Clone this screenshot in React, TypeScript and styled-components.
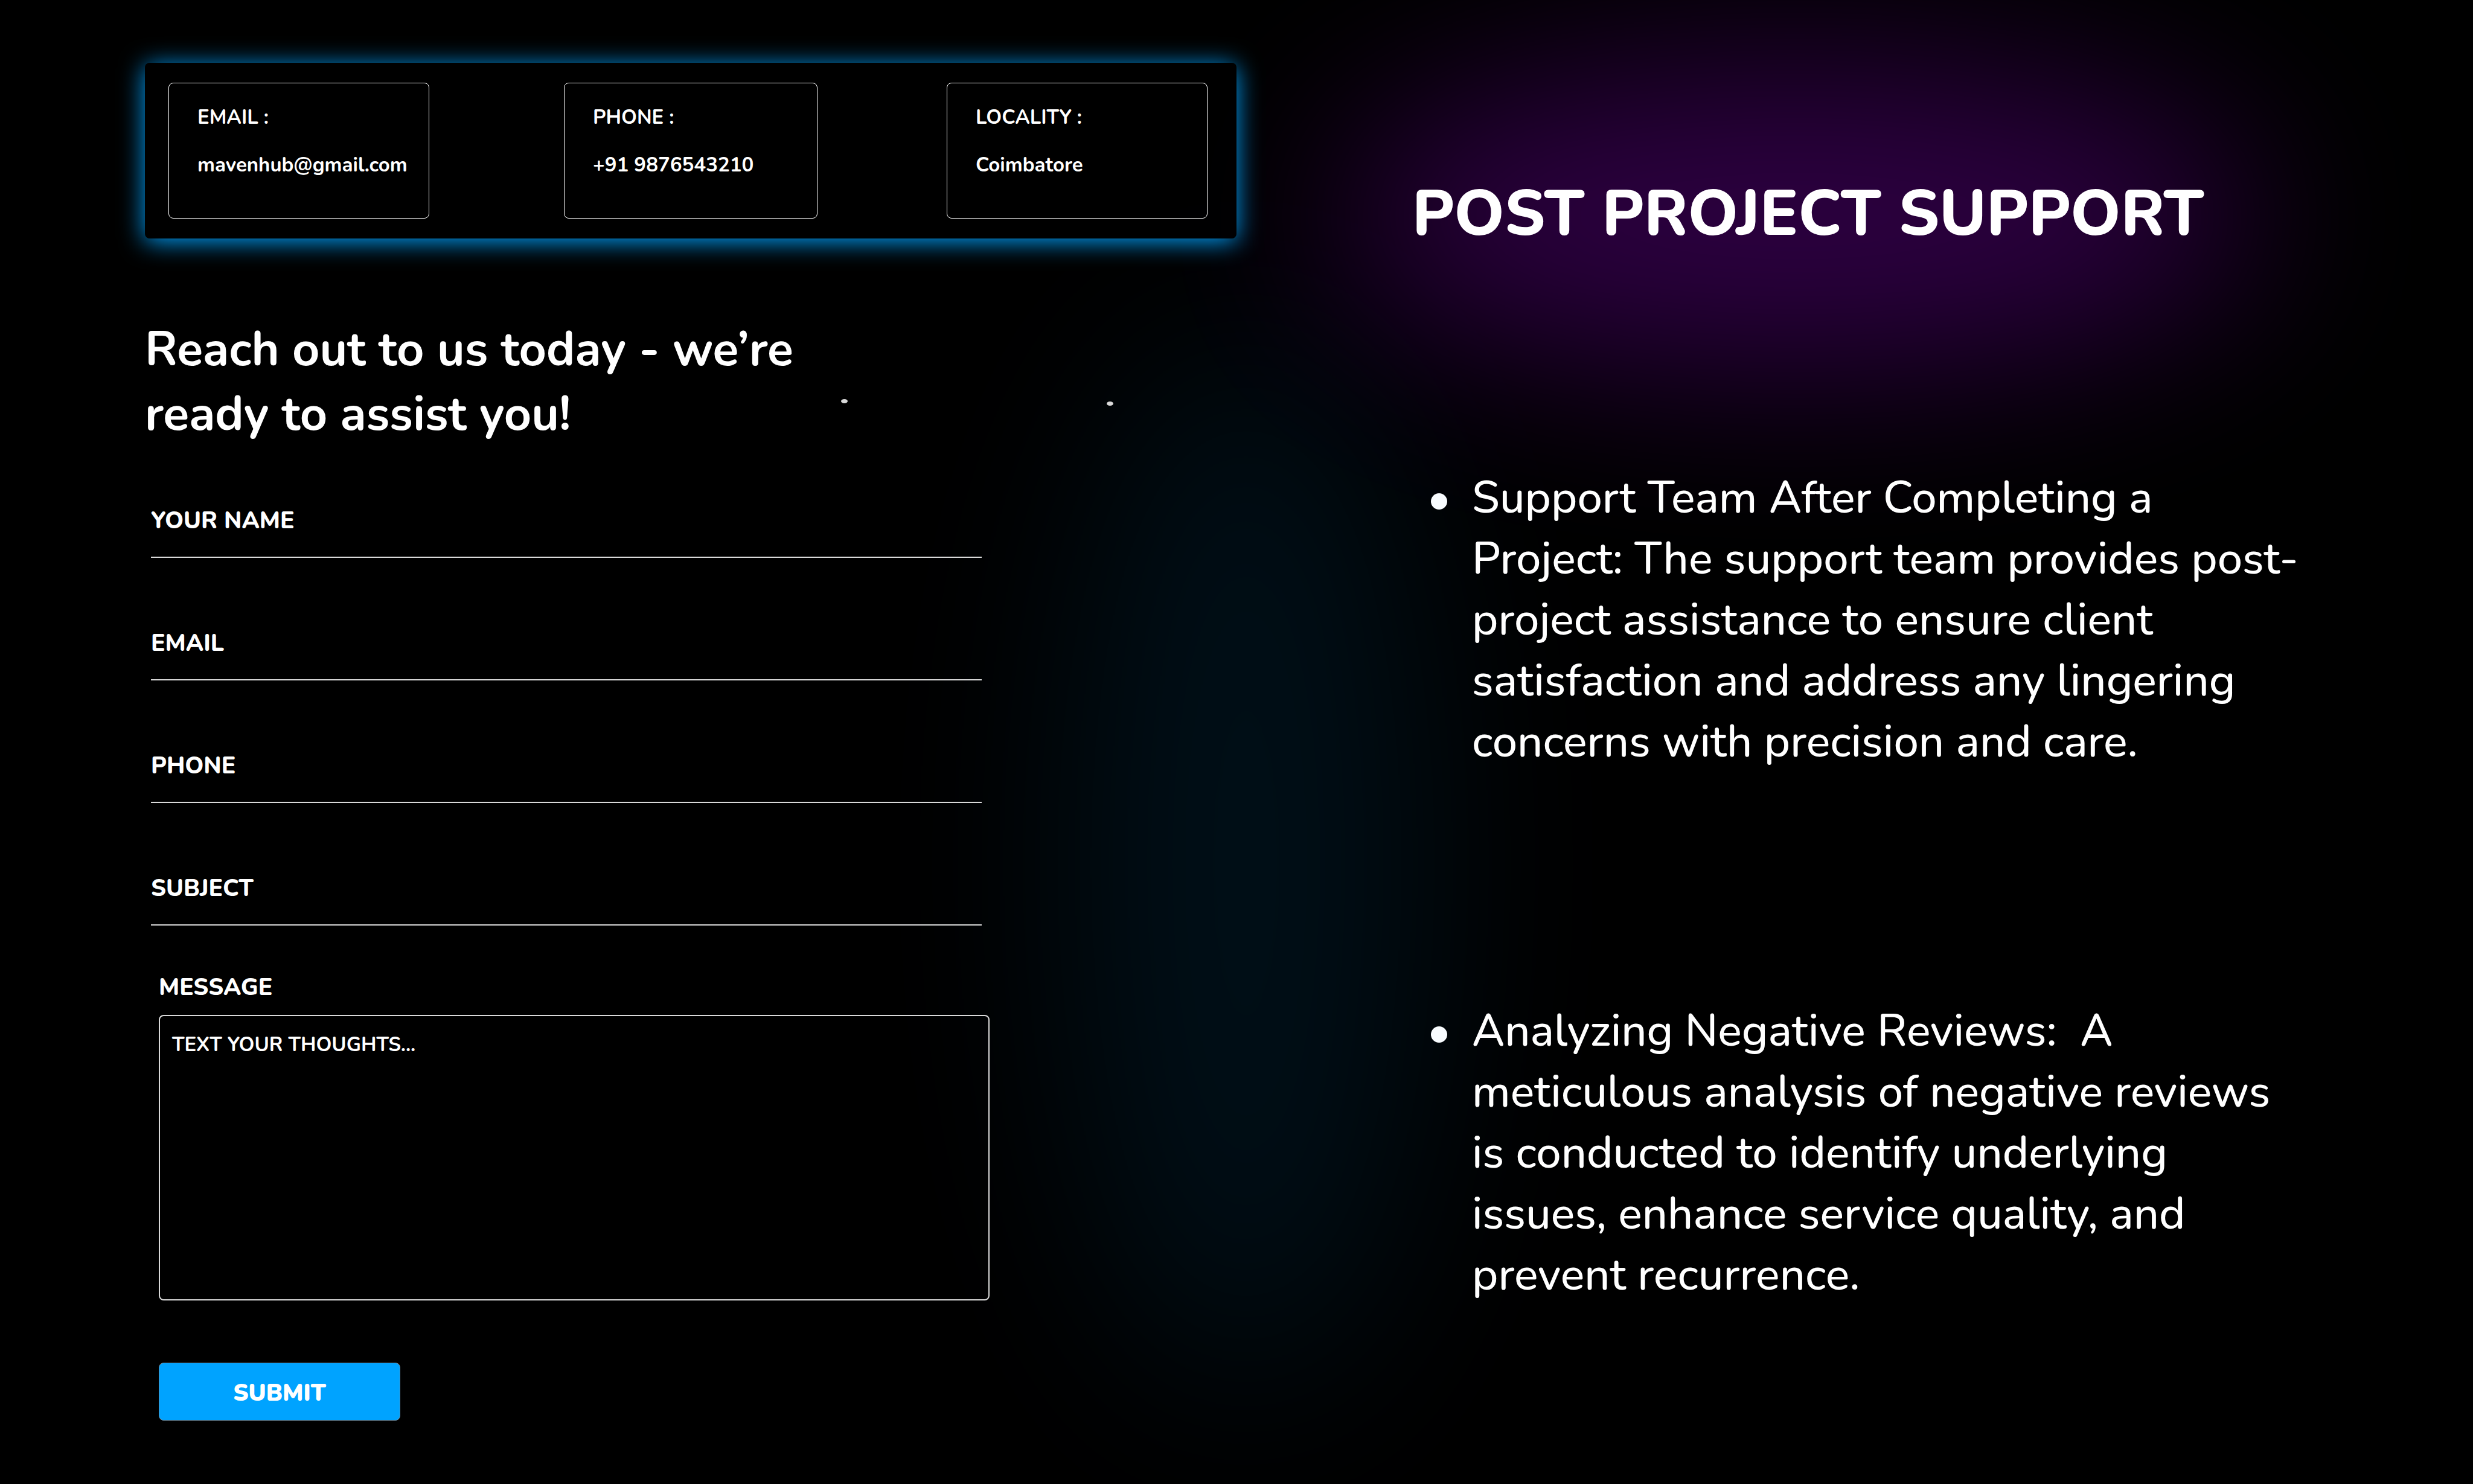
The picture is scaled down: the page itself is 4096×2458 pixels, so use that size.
import React from "react";
import styled, { createGlobalStyle } from "styled-components";

const GlobalStyle = createGlobalStyle`
  *, *::before, *::after { box-sizing: border-box; }
  body {
    margin: 0;
    background: #000;
    color: #fff;
    font-family: "Nunito", "Nunito Sans", "Open Sans", sans-serif;
  }
  h1, h2, p, ul, dl, dt, dd { margin: 0; padding: 0; }
  input, textarea, button { font-family: inherit; color: inherit; }
`;

const Page = styled.main`
  position: relative;
  isolation: isolate;
  overflow: hidden;
  min-height: 100vh;
  display: grid;
  grid-template-columns: 1808fr 1757fr;
  column-gap: 291px;
  align-items: start;
  padding: 104px 0 104px 240px;
`;

const Glow = styled.div<{ $tone: "blue" | "purple" }>`
  position: absolute;
  z-index: -1;
  border-radius: 50%;
  pointer-events: none;
  transform: translate(-50%, -50%);
  ${({ $tone }) =>
    $tone === "blue"
      ? `left: 50.4%; top: 1430px; width: 600px; height: 1760px;
         background: #00a3ff; opacity: 0.09; filter: blur(170px);`
      : `left: 72.6%; top: 358px; width: 1540px; height: 520px;
         background: #a000e8; opacity: 0.28; filter: blur(150px);`}
`;

const Speck = styled.span<{ $left: string; $top: string }>`
  position: absolute;
  left: ${({ $left }) => $left};
  top: ${({ $top }) => $top};
  width: 11px;
  height: 7px;
  border-radius: 50%;
  background: #d9d9d9;
`;

const ContactColumn = styled.section`
  display: flex;
  flex-direction: column;
`;

const InfoBar = styled.dl`
  display: grid;
  grid-template-columns: 432fr 223fr 420fr 214fr 432fr;
  padding: 33px 48px 33px 39px;
  border-radius: 8px;
  background: rgba(0, 0, 0, 0.5);
  box-shadow: 0 5px 40px #00a3ff;
`;

const InfoCard = styled.div`
  display: flex;
  flex-direction: column;
  gap: 34px;
  height: 225px;
  padding: 34px 0 0 47px;
  border: 1px solid #fff;
  border-radius: 8px;
  font-size: 33px;
  line-height: 45px;
  font-weight: 700;
  white-space: nowrap;

  &:nth-child(2) { grid-column: 3; }
  &:nth-child(3) { grid-column: 5; }
`;

const Title = styled.h1`
  max-width: 1200px;
  margin-top: 131px;
  font-size: 79px;
  line-height: 107px;
  font-weight: 700;
`;

const Form = styled.form`
  display: flex;
  flex-direction: column;
  max-width: 1399px;
  margin-top: 95px;
`;

const FieldList = styled.div`
  display: flex;
  flex-direction: column;
  gap: 114px;
  padding: 0 13px 0 10px;
`;

const Field = styled.div`
  display: flex;
  flex-direction: column;
`;

const Label = styled.label`
  font-size: 39px;
  line-height: 56px;
  font-weight: 800;
`;

const LineInput = styled.input`
  width: 100%;
  height: 33px;
  padding: 0;
  border: 0;
  border-bottom: 2px solid rgba(255, 255, 255, 0.85);
  border-radius: 0;
  background: transparent;
  font-size: 24px;
  outline: none;
`;

const MessageBlock = styled.div`
  display: flex;
  flex-direction: column;
  align-items: flex-start;
  gap: 17px;
  margin-top: 75px;
  padding-left: 23px;
`;

const MessageBox = styled.textarea`
  display: block;
  width: 100%;
  height: 473px;
  padding: 25px 20px;
  border: 2px solid rgba(255, 255, 255, 0.85);
  border-radius: 8px;
  background: transparent;
  font-size: 33px;
  line-height: 45px;
  font-weight: 700;
  resize: none;
  outline: none;
  &::placeholder { color: #fff; opacity: 1; }
`;

const SubmitButton = styled.button`
  align-self: flex-start;
  width: 400px;
  height: 96px;
  margin: 103px 0 0 23px;
  padding: 6px 0 0;
  border: 1px solid #6f8ea3;
  border-radius: 8px;
  background: #00a3ff;
  font-size: 39px;
  line-height: 56px;
  font-weight: 900;
  cursor: pointer;
`;

const SupportColumn = styled.section`
  display: flex;
  flex-direction: column;
  gap: 346px;
  padding-top: 178px;
`;

const SupportTitle = styled.h2`
  font-size: 105px;
  line-height: 146px;
  font-weight: 800;
  white-space: nowrap;
`;

const SupportList = styled.ul`
  display: flex;
  flex-direction: column;
  gap: 378px;
  padding-left: 31px;
  list-style: none;
`;

const SupportItem = styled.li`
  display: flex;
  align-items: flex-start;
  gap: 41px;
  font-size: 74px;
  line-height: 101px;
  font-weight: 500;

  &::before {
    content: "";
    flex: none;
    width: 27px;
    height: 27px;
    margin-top: 43px;
    border-radius: 50%;
    background: #f8fcff;
  }
`;

const SupportText = styled.p`
  max-width: 1384px;
`;

const contacts = [
  { term: "EMAIL :", value: "mavenhub@gmail.com" },
  { term: "PHONE :", value: "+91 9876543210" },
  { term: "LOCALITY :", value: "Coimbatore" },
];

const fields = [
  { id: "name", label: "YOUR NAME", type: "text" },
  { id: "email", label: "EMAIL", type: "email" },
  { id: "phone", label: "PHONE", type: "tel" },
  { id: "subject", label: "SUBJECT", type: "text" },
];

const supportPoints = [
  "Support Team After Completing a Project: The support team provides post-project assistance to ensure client satisfaction and address any lingering concerns with precision and care.",
  "Analyzing Negative Reviews: \u00a0A meticulous analysis of negative reviews is conducted to identify underlying issues, enhance service quality, and prevent recurrence.",
];

export default function App() {
  return (
    <>
      <GlobalStyle />
      <Page>
        <Glow $tone="blue" />
        <Glow $tone="purple" />
        <Speck $left="34%" $top="661px" />
        <Speck $left="44.75%" $top="665px" />

        <ContactColumn>
          <InfoBar>
            {contacts.map(({ term, value }) => (
              <InfoCard key={term}>
                <dt>{term}</dt>
                <dd>{value}</dd>
              </InfoCard>
            ))}
          </InfoBar>

          <Title>Reach out to us today - we’re ready to assist you!</Title>

          <Form onSubmit={(event) => event.preventDefault()}>
            <FieldList>
              {fields.map(({ id, label, type }) => (
                <Field key={id}>
                  <Label htmlFor={id}>{label}</Label>
                  <LineInput id={id} name={id} type={type} />
                </Field>
              ))}
            </FieldList>
            <MessageBlock>
              <Label htmlFor="message">MESSAGE</Label>
              <MessageBox id="message" name="message" placeholder="TEXT YOUR THOUGHTS..." />
            </MessageBlock>
            <SubmitButton type="submit">SUBMIT</SubmitButton>
          </Form>
        </ContactColumn>

        <SupportColumn>
          <SupportTitle>POST PROJECT SUPPORT</SupportTitle>
          <SupportList>
            {supportPoints.map((text) => (
              <SupportItem key={text}>
                <SupportText>{text}</SupportText>
              </SupportItem>
            ))}
          </SupportList>
        </SupportColumn>
      </Page>
    </>
  );
}
